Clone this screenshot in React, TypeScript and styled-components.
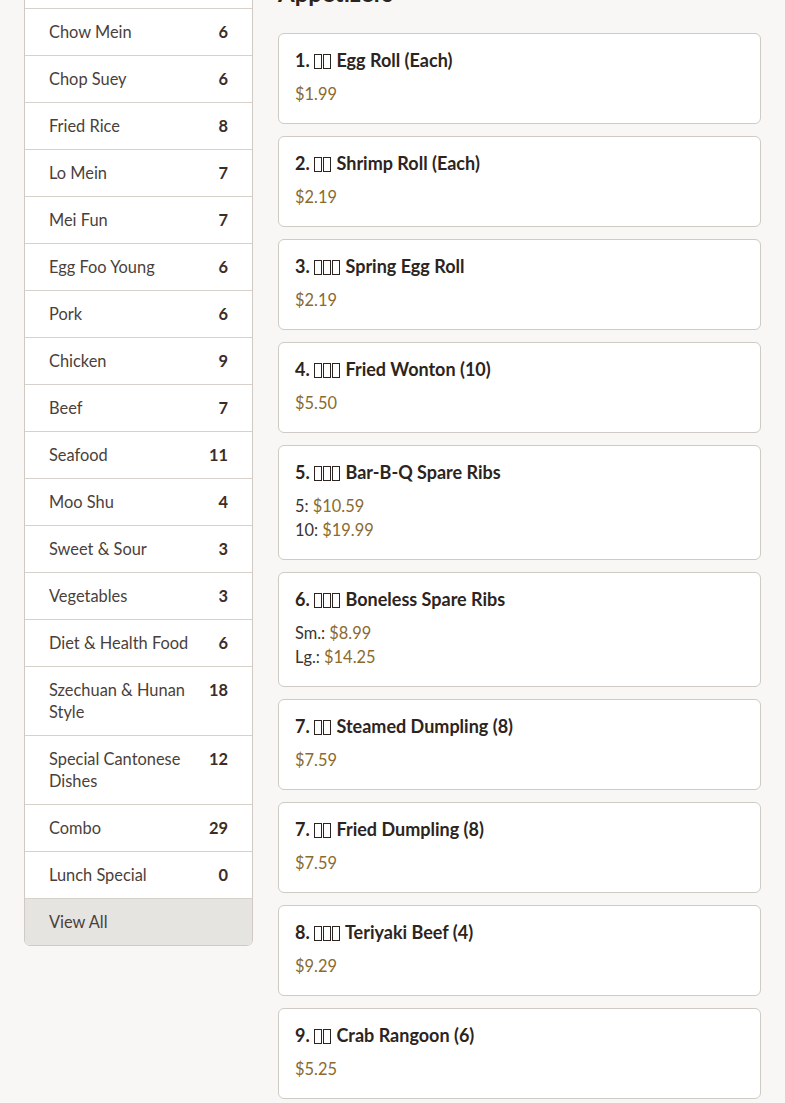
import React from 'react';
import styled, { createGlobalStyle } from 'styled-components';

const GlobalStyle = createGlobalStyle`
  body {
    margin: 0;
    background: #f8f7f5;
    font-family: Lato, "Noto Sans", sans-serif;
    color: #3a302c;
  }
`;

const Page = styled.div`
  margin-top: -86px;
  padding: 0 24px 24px;
  display: grid;
  grid-template-columns: 229px 1fr;
  column-gap: 25px;
  align-items: start;
`;

const Sidebar = styled.nav`
  background: #fff;
  border: 1px solid #cfcac4;
  border-radius: 6px;
  overflow: hidden;
`;

const CategoryRow = styled.div<{ $muted?: boolean }>`
  display: flex;
  align-items: flex-start;
  justify-content: space-between;
  gap: 16px;
  padding: 12px 24px;
  line-height: 22px;
  font-size: 16.4px;
  color: #4a3f3b;
  background: ${(p) => (p.$muted ? '#e6e4e1' : '#fff')};
  border-bottom: 1px solid #d6d1cb;

  &:last-child {
    border-bottom: none;
  }
`;

const CategoryName = styled.span`
  flex: 1;
`;

const Count = styled.span`
  font-weight: 700;
  color: #3b2d28;
`;

const Menu = styled.section`
  padding-top: 63px;
`;

const Heading = styled.h2`
  margin: 0 0 24px;
  font-size: 24px;
  line-height: 32px;
  font-weight: 700;
  color: #2d2420;
`;

const Cards = styled.div`
  display: flex;
  flex-direction: column;
  gap: 12px;
`;

const Card = styled.article`
  background: #fff;
  border: 1px solid #cfcac4;
  border-radius: 6px;
  padding: 15px 16px 17px;
`;

const Title = styled.h3`
  margin: 0 0 11px;
  font-size: 18px;
  line-height: 22px;
  font-weight: 700;
  color: #2d2420;
`;

const Tofu = styled.span`
  display: inline-block;
  width: 6px;
  height: 13px;
  border: 1px solid #2d2420;
  margin-right: 1px;
  vertical-align: -2px;
`;

const PriceLine = styled.div`
  font-size: 16.4px;
  line-height: 24px;
  color: #3a3330;
`;

const Amount = styled.span`
  color: #8a6a2e;
`;

type Price = { label?: string; value: string };
type Item = { no: number; zh: number; name: string; prices: Price[] };

const categories: [string, number][] = [
  ['Appetizers', 14],
  ['Soup', 9],
  ['Chow Mein', 6],
  ['Chop Suey', 6],
  ['Fried Rice', 8],
  ['Lo Mein', 7],
  ['Mei Fun', 7],
  ['Egg Foo Young', 6],
  ['Pork', 6],
  ['Chicken', 9],
  ['Beef', 7],
  ['Seafood', 11],
  ['Moo Shu', 4],
  ['Sweet & Sour', 3],
  ['Vegetables', 3],
  ['Diet & Health Food', 6],
  ['Szechuan & Hunan Style', 18],
  ['Special Cantonese Dishes', 12],
  ['Combo', 29],
  ['Lunch Special', 0],
];

const items: Item[] = [
  { no: 1, zh: 2, name: 'Egg Roll (Each)', prices: [{ value: '$1.99' }] },
  { no: 2, zh: 2, name: 'Shrimp Roll (Each)', prices: [{ value: '$2.19' }] },
  { no: 3, zh: 3, name: 'Spring Egg Roll', prices: [{ value: '$2.19' }] },
  { no: 4, zh: 3, name: 'Fried Wonton (10)', prices: [{ value: '$5.50' }] },
  {
    no: 5,
    zh: 3,
    name: 'Bar-B-Q Spare Ribs',
    prices: [
      { label: '5', value: '$10.59' },
      { label: '10', value: '$19.99' },
    ],
  },
  {
    no: 6,
    zh: 3,
    name: 'Boneless Spare Ribs',
    prices: [
      { label: 'Sm.', value: '$8.99' },
      { label: 'Lg.', value: '$14.25' },
    ],
  },
  { no: 7, zh: 2, name: 'Steamed Dumpling (8)', prices: [{ value: '$7.59' }] },
  { no: 7, zh: 2, name: 'Fried Dumpling (8)', prices: [{ value: '$7.59' }] },
  { no: 8, zh: 3, name: 'Teriyaki Beef (4)', prices: [{ value: '$9.29' }] },
  { no: 9, zh: 2, name: 'Crab Rangoon (6)', prices: [{ value: '$5.25' }] },
  { no: 10, zh: 3, name: 'Chicken Wings (6)', prices: [{ value: '$7.99' }] },
];

function MenuCard({ item }: { item: Item }) {
  return (
    <Card>
      <Title>
        {item.no}.{' '}
        {Array.from({ length: item.zh }).map((_, i) => (
          <Tofu key={i} aria-hidden />
        ))}{' '}
        {item.name}
      </Title>
      {item.prices.map((p, i) => (
        <PriceLine key={i}>
          {p.label ? `${p.label}: ` : ''}
          <Amount>{p.value}</Amount>
        </PriceLine>
      ))}
    </Card>
  );
}

export default function App() {
  return (
    <>
      <GlobalStyle />
      <Page>
        <Sidebar>
          {categories.map(([name, count]) => (
            <CategoryRow key={name}>
              <CategoryName>{name}</CategoryName>
              <Count>{count}</Count>
            </CategoryRow>
          ))}
          <CategoryRow $muted>
            <CategoryName>View All</CategoryName>
          </CategoryRow>
        </Sidebar>
        <Menu>
          <Heading>Appetizers</Heading>
          <Cards>
            {items.map((item, i) => (
              <MenuCard key={i} item={item} />
            ))}
          </Cards>
        </Menu>
      </Page>
    </>
  );
}
